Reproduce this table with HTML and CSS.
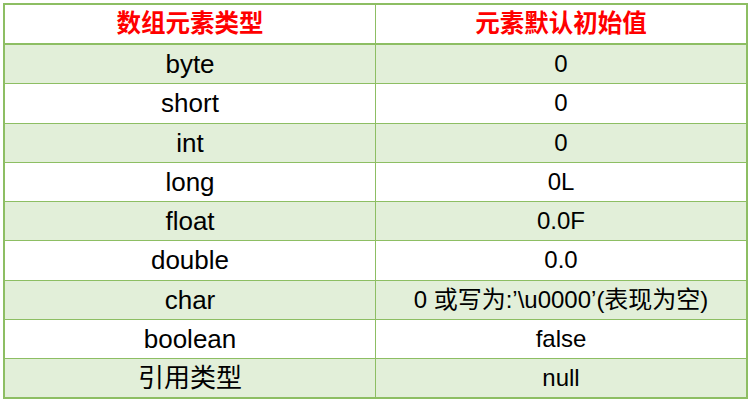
FILE: index.html
```html
<!DOCTYPE html>
<html lang="zh">
<head>
<meta charset="utf-8">
<title>数组元素默认初始值</title>
<link rel="stylesheet" href="styles.css">
</head>
<body>
<table class="defaults">
  <thead>
    <tr class="head"><th>数组元素类型</th><th>元素默认初始值</th></tr>
  </thead>
  <tbody>
    <tr class="odd"><td class="type">byte</td><td class="val">0</td></tr>
    <tr class="even"><td class="type">short</td><td class="val">0</td></tr>
    <tr class="odd"><td class="type">int</td><td class="val">0</td></tr>
    <tr class="even"><td class="type">long</td><td class="val">0L</td></tr>
    <tr class="odd"><td class="type">float</td><td class="val">0.0F</td></tr>
    <tr class="even"><td class="type">double</td><td class="val">0.0</td></tr>
    <tr class="odd"><td class="type">char</td><td class="val">0 或写为:’\u0000’(表现为空)</td></tr>
    <tr class="even"><td class="type">boolean</td><td class="val">false</td></tr>
    <tr class="odd"><td class="type">引用类型</td><td class="val">null</td></tr>
  </tbody>
</table>
</body>
</html>
```
FILE: styles.css
```css
html, body {
  margin: 0;
  padding: 0;
  background: #ffffff;
}
body {
  padding: 3px 0 0 3px;
  font-family: "Liberation Sans", "Noto Sans CJK SC", sans-serif;
  color: #000000;
}
.defaults {
  border-collapse: collapse;
  table-layout: fixed;
  width: 745px;
  border: 2px solid #8dbe63;
}
.defaults th,
.defaults td {
  border: 1px solid #8dbe63;
  padding: 0;
  text-align: center;
  vertical-align: middle;
  line-height: 1;
  white-space: nowrap;
}
.defaults th {
  height: 38px;
  color: #ff0000;
  font-weight: bold;
  font-size: 24.5px;
  border-bottom: 2px solid #8dbe63;
}
.defaults td {
  height: 38.25px;
}
.defaults th:first-child,
.defaults td:first-child {
  width: 370px;
}
.type {
  font-size: 26px;
}
.val {
  font-size: 24px;
}
.head { background: #ffffff; }
.odd { background: #e2efd9; }
.even { background: #ffffff; }
```
